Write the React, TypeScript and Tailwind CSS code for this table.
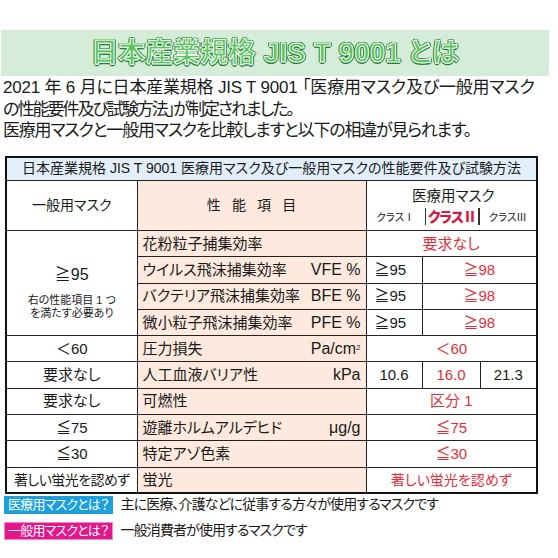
const jp = "font-['Liberation_Sans','Noto_Sans_CJK_JP',sans-serif] [font-feature-settings:'palt']";

type Row = {
  left?: React.ReactNode;
  item: string;
  unit?: React.ReactNode;
  cells: React.ReactNode;
};

const red = "text-[#e0303c]";
const cell = "border-[1.5px] border-[#222]";

const rows: Row[] = [
  { item: "花粉粒子捕集効率", cells: <td colSpan={3} className={`${cell} text-center ${red}`}>要求なし</td> },
  {
    item: "ウイルス飛沫捕集効率",
    unit: "VFE %",
    cells: (
      <>
        <td className={`${cell} pl-2`}>≧95</td>
        <td colSpan={2} className={`${cell} text-center ${red}`}>≧98</td>
      </>
    ),
  },
  {
    item: "バクテリア飛沫捕集効率",
    unit: "BFE %",
    cells: (
      <>
        <td className={`${cell} pl-2`}>≧95</td>
        <td colSpan={2} className={`${cell} text-center ${red}`}>≧98</td>
      </>
    ),
  },
  {
    item: "微小粒子飛沫捕集効率",
    unit: "PFE %",
    cells: (
      <>
        <td className={`${cell} pl-2`}>≧95</td>
        <td colSpan={2} className={`${cell} text-center ${red}`}>≧98</td>
      </>
    ),
  },
  {
    left: "＜60",
    item: "圧力損失",
    unit: (
      <span>
        Pa/cm<sup className="text-[8px]">2</sup>
      </span>
    ),
    cells: <td colSpan={3} className={`${cell} text-center ${red}`}>＜60</td>,
  },
  {
    left: "要求なし",
    item: "人工血液バリア性",
    unit: "kPa",
    cells: (
      <>
        <td className={`${cell} text-center`}>10.6</td>
        <td className={`${cell} text-center ${red}`}>16.0</td>
        <td className={`${cell} text-center`}>21.3</td>
      </>
    ),
  },
  { left: "要求なし", item: "可燃性", cells: <td colSpan={3} className={`${cell} text-center ${red}`}>区分 1</td> },
  { left: "≦75", item: "遊離ホルムアルデヒド", unit: "μg/g", cells: <td colSpan={3} className={`${cell} text-center ${red}`}>≦75</td> },
  { left: "≦30", item: "特定アゾ色素", cells: <td colSpan={3} className={`${cell} text-center ${red}`}>≦30</td> },
  {
    left: <span className="text-[14px] tracking-[-0.6px]">著しい蛍光を認めず</span>,
    item: "蛍光",
    cells: <td colSpan={3} className={`${cell} text-center text-[14px] ${red}`}>著しい蛍光を認めず</td>,
  },
];

export default function App() {
  return (
    <div className={`w-[558px] h-[558px] bg-white overflow-hidden text-[#1a1a1a] ${jp}`}>
      <div className="pt-[30px] pl-[1px]">
        <div className="w-[548px] h-[46px] bg-[#d5ecd8] flex items-center justify-center">
          <h1 className="text-[27px] font-bold text-[#5cc460] tracking-[0.5px] [-webkit-text-stroke:1px_#ffffff] [text-shadow:0_0_1px_#238233,1.5px_0_0_#238233,-1.5px_0_0_#238233,0_1.5px_0_#238233,0_-1.5px_0_#238233,1px_1px_0_#238233,-1px_-1px_0_#238233,1px_-1px_0_#238233,-1px_1px_0_#238233]">
            日本産業規格 JIS T 9001 とは
          </h1>
        </div>
      </div>

      <div className="pl-[3px] pt-[1px] text-[17px] leading-[21.5px] whitespace-nowrap">
        <p className="tracking-[-0.2px]">2021 年 6 月に日本産業規格 JIS T 9001 「医療用マスク及び一般用マスク</p>
        <p className="tracking-[-2px]">の性能要件及び試験方法」が制定されました。</p>
        <p className="tracking-[-1.2px]">医療用マスクと一般用マスクを比較しますと以下の相違が見られます。</p>
      </div>

      <div className="pl-[5px] pt-[14px]">
        <table className="w-[531px] table-fixed border-collapse border-2 border-[#111] text-[15px]">
          <colgroup>
            <col className="w-[131px]" />
            <col className="w-[229px]" />
            <col className="w-[56px]" />
            <col className="w-[58px]" />
            <col className="w-[57px]" />
          </colgroup>
          <tbody>
            <tr className="h-[24px]">
              <td colSpan={5} className={`bg-[#e2eef9] ${cell} text-center text-[14px] whitespace-nowrap`}>
                日本産業規格 JIS T 9001 医療用マスク及び一般用マスクの性能要件及び試験方法
              </td>
            </tr>
            <tr className="h-[50px]">
              <td className={`${cell} text-center text-[14px]`}>一般用マスク</td>
              <td className={`${cell} bg-[#fde9dd] text-center text-[14px] tracking-[0.8em] pl-[0.8em]`}>性能項目</td>
              <td colSpan={3} className={`${cell} p-0`}>
                <div className="flex flex-col items-center">
                  <div className="text-[14.5px] leading-[20px] pl-1">医療用マスク</div>
                  <div className="flex items-center w-full text-[10.5px] leading-[18px] mt-[2px]">
                    <span className="w-[58px] text-center">クラスⅠ</span>
                    <span className="w-[1.5px] h-[17px] bg-[#333]" />
                    <span className="w-[52px] text-center text-[14px] font-black text-[#d31c47] tracking-[-1px]">クラスⅡ</span>
                    <span className="w-[1.5px] h-[17px] bg-[#333]" />
                    <span className="flex-1 text-center">クラスⅢ</span>
                  </div>
                </div>
              </td>
            </tr>
            {rows.map((r, i) => (
              <tr key={r.item} className="h-[26.3px] leading-[20px]">
                {i === 0 && (
                  <td rowSpan={4} className={`${cell} text-center align-top`}>
                    <div className="pt-[34px] text-[16px]">≧95</div>
                    <div className="pt-[9px] text-[11px] leading-[13px]">
                      右の性能項目 1 つ
                      <br />
                      を満たす必要あり
                    </div>
                  </td>
                )}
                {r.left !== undefined && (
                  <td className={`${cell} text-center text-[15px] whitespace-nowrap`}>{r.left}</td>
                )}
                <td className={`${cell} bg-[#fde9dd] px-[5px] whitespace-nowrap`}>
                  <div className="flex justify-between items-end">
                    <span>{r.item}</span>
                    {r.unit && <span className="text-[16px]">{r.unit}</span>}
                  </div>
                </td>
                {r.cells}
              </tr>
            ))}
          </tbody>
        </table>
      </div>

      <div className="pl-[4px] pt-0 text-[14px] flex flex-col gap-[5px]">
        <div className="flex items-center gap-[8px]">
          <span className="bg-[#1d9fda] text-white px-[4px] h-[18px] leading-[18px] text-[13px] tracking-[-0.8px]">医療用マスクとは？</span>
          <span className="tracking-[-0.9px]">主に医療、介護などに従事する方々が使用するマスクです</span>
        </div>
        <div className="flex items-center gap-[8px]">
          <span className="bg-[#e3178b] text-white px-[3px] h-[18px] leading-[16px] text-[13px] tracking-[-0.8px] border border-[#f08cc4]">一般用マスクとは？</span>
          <span className="tracking-[-0.9px]">一般消費者が使用するマスクです</span>
        </div>
      </div>
    </div>
  );
}
